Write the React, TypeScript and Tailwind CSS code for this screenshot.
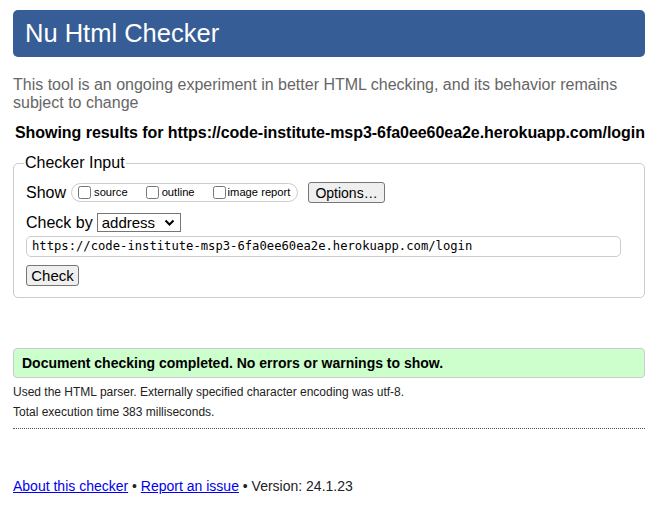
export default function App() {
  const url = "https://code-institute-msp3-6fa0ee60ea2e.herokuapp.com/login"
  return (
    <div className="min-h-screen bg-white px-[13px] pt-[10px] text-[16px] text-black" style={{ fontFamily: '"Liberation Sans", Arial, sans-serif' }}>
      <header className="flex h-[47px] items-center rounded-[5px] bg-[#365d95] px-[12px]">
        <h1 className="text-[25.5px] leading-none text-white">Nu Html Checker</h1>
      </header>

      <p className="mt-[19px] text-[16px] leading-[18px] text-[#666]">
        This tool is an ongoing experiment in better HTML checking, and its behavior remains subject to change
      </p>

      <p className="mt-[12px] whitespace-nowrap pl-[2px] text-[16px] font-bold leading-[18px] tracking-[-0.05px]">
        Showing results for {url}
      </p>

      <fieldset className="mt-[12px] rounded-[5px] border border-[#ccc] px-[12px] pb-[9px] pt-[10px]">
        <legend className="-ml-[2px] px-[1px] text-[16px] leading-[18px]">Checker Input</legend>

        <div className="flex items-center">
          <span className="text-[16px] leading-[18px]">Show</span>
          <div className="ml-[5px] flex h-[19px] items-center rounded-full border border-[#ccc] pl-[6px] pr-[7px] text-[11.2px]">
            <label className="flex items-center">
              <input type="checkbox" className="m-0 h-[13px] w-[13px]" />
              <span className="ml-[3px]">source</span>
            </label>
            <label className="ml-[18px] flex items-center">
              <input type="checkbox" className="m-0 h-[13px] w-[13px]" />
              <span className="ml-[3px]">outline</span>
            </label>
            <label className="ml-[18px] flex items-center">
              <input type="checkbox" className="m-0 h-[13px] w-[13px]" />
              <span className="ml-[2px]">image report</span>
            </label>
          </div>
          <button className="ml-[10px] h-[21px] rounded-[3px] border border-[#767676] bg-[#efefef] px-[6px] text-[14px] leading-none">
            Options…
          </button>
        </div>

        <div className="mt-[10px] flex items-center">
          <span className="text-[16px] leading-[18px]">Check by</span>
          <div className="ml-[4px] flex h-[19px] w-[84px] items-center justify-between border border-[#767676] bg-white pl-[4px] pr-[5px] text-[15px] leading-none">
            <span>address</span>
            <svg width="11" height="8" viewBox="0 0 11 8">
              <path d="M1.5 1.5 L5.5 5.5 L9.5 1.5" fill="none" stroke="#000" strokeWidth="2" />
            </svg>
          </div>
        </div>

        <div className="mr-[11px] mt-[4px] flex h-[21px] items-center rounded-[5px] border border-[#ccc] pl-[5px] pr-[4px] text-[12.2px]" style={{ fontFamily: '"DejaVu Sans Mono", Consolas, monospace' }}>
          {url}
        </div>

        <button className="mt-[8px] h-[21px] w-[53px] rounded-[3px] border border-[#767676] bg-[#efefef] text-[15px] leading-none">
          Check
        </button>
      </fieldset>

      <div className="mt-[50px] flex h-[30px] items-center rounded-[4px] border border-[#ccc] bg-[#ccffcc] px-[8px] text-[14px] font-bold">
        Document checking completed. No errors or warnings to show.
      </div>

      <p className="mt-[7px] text-[12px] leading-[14px] text-[#222]">
        Used the HTML parser. Externally specified character encoding was utf-8.
      </p>
      <p className="mt-[6px] text-[12px] leading-[14px] text-[#222]">Total execution time 383 milliseconds.</p>

      <hr className="mt-[9px] border-0 border-t border-dotted border-[#555]" />

      <p className="mt-[49px] text-[14px] leading-[16px] text-[#222]">
        <a href="#" className="text-[#0000ee] underline">About this checker</a>
        {" • "}
        <a href="#" className="text-[#0000ee] underline">Report an issue</a>
        {" • Version: 24.1.23"}
      </p>
    </div>
  )
}
